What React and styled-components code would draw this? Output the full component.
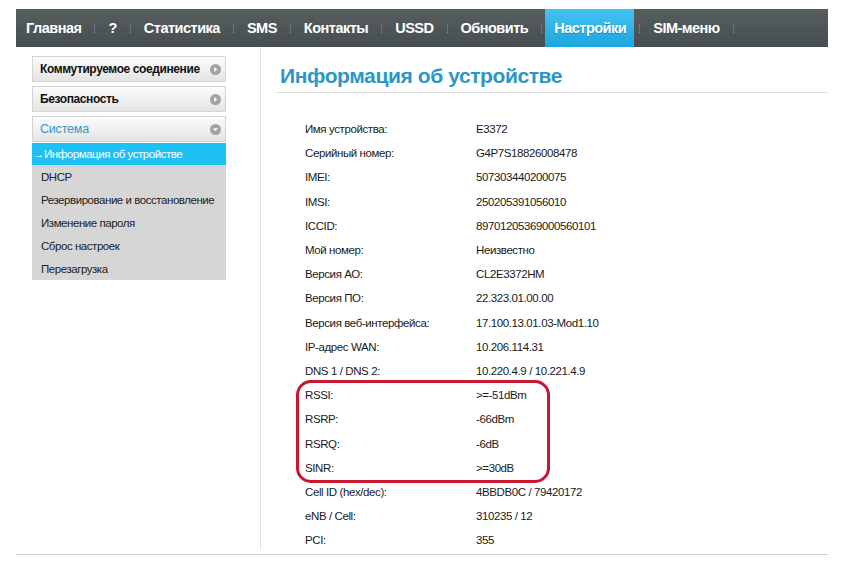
import React from "react";
import styled, { createGlobalStyle } from "styled-components";

const Global = createGlobalStyle`
  html, body { margin: 0; padding: 0; background: #fff; }
  body { font-family: "Liberation Sans", Arial, sans-serif; color: #222; }
  * { box-sizing: border-box; }
`;

const Page = styled.div`
  width: 812px;
  margin-left: 16px;
  padding-top: 9px;
`;

const NavBar = styled.nav`
  display: flex;
  align-items: stretch;
  height: 38px;
  background: linear-gradient(#565e60, #474e50);
`;

const NavItem = styled.div`
  display: flex;
  align-items: center;
  padding: ${(p) => (p.$active ? "0 8px 0 9px" : p.$first ? "0 13px 0 10px" : "0 13px")};
  margin: ${(p) => (p.$active ? "0 5px 0 3px" : "0")};
  font-size: 14.5px;
  font-weight: bold;
  letter-spacing: -0.5px;
  color: #fff;
  white-space: nowrap;
  background: ${(p) => (p.$active ? "linear-gradient(#45c2f2, #1ba6de)" : "transparent")};
  text-shadow: ${(p) => (p.$active ? "0 1px 1px rgba(0,0,0,0.25)" : "none")};
`;

const Sep = styled.span`
  align-self: center;
  flex: none;
  width: 0;
  height: 9px;
  border-left: 1px dotted #8a9092;
`;

const Body = styled.div`
  display: flex;
  align-items: flex-start;
  height: 508px;
  border-bottom: 1px solid #cfcfcf;
`;

const Sidebar = styled.aside`
  width: 244px;
  padding: 9px 0 0 16px;
  flex: none;
`;

const MenuBox = styled.div`
  display: flex;
  align-items: center;
  justify-content: space-between;
  height: 26px;
  width: 194px;
  margin-bottom: ${(p) => (p.$open ? 1 : 4)}px;
  padding: 0 4px 0 7px;
  border: 1px solid #d4d4d4;
  background: linear-gradient(#fcfcfc, #e4e4e4);
  font-size: ${(p) => (p.$open ? "12.5px" : "12px")};
  letter-spacing: ${(p) => (p.$open ? "-0.2px" : "-0.4px")};
  font-weight: ${(p) => (p.$open ? "normal" : "bold")};
  color: ${(p) => (p.$open ? "#3597c4" : "#111")};
`;

const SubList = styled.div`
  width: 194px;
  background: #d6d6d6;
`;

const SubItem = styled.div`
  height: ${(p) => (p.$active ? 22 : 23)}px;
  display: flex;
  align-items: center;
  padding-left: ${(p) => (p.$active ? 1 : 9)}px;
  font-size: 11.5px;
  letter-spacing: -0.45px;
  color: ${(p) => (p.$active ? "#fff" : "#222")};
  background: ${(p) => (p.$active ? "#1ec1f4" : "transparent")};
  white-space: nowrap;
`;

const Content = styled.main`
  flex: 1;
  height: 503px;
  border-left: 1px solid #e2e2e2;
  padding: 17px 0 0 15px;
`;

const Title = styled.h1`
  margin: 0;
  padding: 0 0 4px 4px;
  font-size: 21px;
  font-weight: bold;
  color: #2b97c6;
  border-bottom: 1px solid #dedede;
  letter-spacing: -0.4px;
`;

const Table = styled.div`
  margin: 24px 0 0 20px;
`;

const Row = styled.div`
  display: flex;
  align-items: center;
  height: 24.2px;
  padding-left: ${(p) => (p.$inBox ? 6 : 9)}px;
  font-size: 11.5px;
  letter-spacing: -0.4px;
  color: #1a1a1a;
`;

const Label = styled.span`
  width: 171px;
  flex: none;
`;

const Value = styled.span``;

const Highlight = styled.div`
  width: 254px;
  border: 3px solid #c8162e;
  border-radius: 15px;
  margin: -3px 0;
`;

const Circle = ({ down }) => (
  <svg width="11" height="11" viewBox="0 0 12 12">
    <circle cx="6" cy="6" r="6" fill="#a3a3a3" />
    {down ? (
      <path d="M3.3 4.6 L8.7 4.6 L6 8 Z" fill="#fff" />
    ) : (
      <path d="M4.6 3.3 L8 6 L4.6 8.7 Z" fill="#fff" />
    )}
  </svg>
);

const navItems = ["Главная", "?", "Статистика", "SMS", "Контакты", "USSD", "Обновить", "Настройки", "SIM-меню"];

const rows = [
  ["Имя устройства:", "E3372"],
  ["Серийный номер:", "G4P7S18826008478"],
  ["IMEI:", "507303440200075"],
  ["IMSI:", "250205391056010"],
  ["ICCID:", "89701205369000560101"],
  ["Мой номер:", "Неизвестно"],
  ["Версия АО:", "CL2E3372HM"],
  ["Версия ПО:", "22.323.01.00.00"],
  ["Версия веб-интерфейса:", "17.100.13.01.03-Mod1.10"],
  ["IP-адрес WAN:", "10.206.114.31"],
  ["DNS 1 / DNS 2:", "10.220.4.9 / 10.221.4.9"],
];
const signal = [
  ["RSSI:", ">=-51dBm"],
  ["RSRP:", "-66dBm"],
  ["RSRQ:", "-6dB"],
  ["SINR:", ">=30dB"],
];
const tail = [
  ["Cell ID (hex/dec):", "4BBDB0C / 79420172"],
  ["eNB / Cell:", "310235 / 12"],
  ["PCI:", "355"],
];

export default function App() {
  return (
    <>
      <Global />
      <Page>
        <NavBar>
          {navItems.map((n, i) => (
            <React.Fragment key={n}>
              <NavItem $active={n === "Настройки"} $first={i === 0}>{n}</NavItem>
              <Sep />
            </React.Fragment>
          ))}
        </NavBar>
        <Body>
          <Sidebar>
            <MenuBox>
              Коммутируемое соединение <Circle />
            </MenuBox>
            <MenuBox>
              Безопасность <Circle />
            </MenuBox>
            <MenuBox $open>
              Система <Circle down />
            </MenuBox>
            <SubList>
              <SubItem $active>→Информация об устройстве</SubItem>
              <SubItem>DHCP</SubItem>
              <SubItem>Резервирование и восстановление</SubItem>
              <SubItem>Изменение пароля</SubItem>
              <SubItem>Сброс настроек</SubItem>
              <SubItem>Перезагрузка</SubItem>
            </SubList>
          </Sidebar>
          <Content>
            <Title>Информация об устройстве</Title>
            <Table>
              {rows.map(([l, v]) => (
                <Row key={l}>
                  <Label>{l}</Label>
                  <Value>{v}</Value>
                </Row>
              ))}
              <Highlight>
                {signal.map(([l, v]) => (
                  <Row key={l} $inBox>
                    <Label>{l}</Label>
                    <Value>{v}</Value>
                  </Row>
                ))}
              </Highlight>
              {tail.map(([l, v]) => (
                <Row key={l}>
                  <Label>{l}</Label>
                  <Value>{v}</Value>
                </Row>
              ))}
            </Table>
          </Content>
        </Body>
      </Page>
    </>
  );
}
